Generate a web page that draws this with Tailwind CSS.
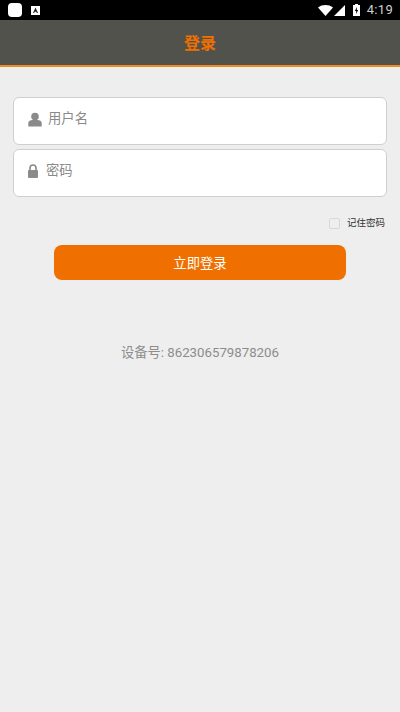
<!DOCTYPE html>
<html lang="zh">
<head>
    <meta charset="UTF-8">
    <meta name="viewport" content="width=device-width, initial-scale=1.0">
    <title>登录</title>
    <script src="https://cdn.jsdelivr.net/npm/@tailwindcss/browser@4"></script>
</head>
<body class="bg-[#eeeeee] h-[712px] overflow-hidden font-['Roboto','Noto_Sans_CJK_SC',sans-serif]">

    <!-- status bar -->
    <div class="h-5 bg-black flex items-center pl-[8px] pr-[7px]">
        <div class="w-[14px] h-[14px] bg-white rounded-[4px]"></div>
        <div class="w-[9px] h-[9px] ml-[9px] bg-white flex items-center justify-center">
            <svg viewBox="0 0 9 9" class="w-[9px] h-[9px]"><path d="M4.5 1.5 L7 7 H5.8 L5.3 5.8 H3.7 L3.2 7 H2 Z" fill="#222"/></svg>
        </div>
        <svg viewBox="0 0 15 11" class="w-[15px] h-[11px] ml-auto"><path d="M0 2.5 C4 -0.8 11 -0.8 15 2.5 L7.5 11 Z" fill="#fff"/></svg>
        <svg viewBox="0 0 11 11" class="w-[11px] h-[11px] ml-[1px]"><path d="M11 0 V11 H0 Z" fill="#fff"/></svg>
        <svg viewBox="0 0 7 12" class="w-[7px] h-[12px] ml-[8px]"><path fill-rule="evenodd" d="M2 0 H5 V1 H7 V12 H0 V1 H2 Z M4 3 L1.8 7 H3.2 L3 10 L5.2 6 H3.8 Z" fill="#fff"/></svg>
        <span class="ml-[7px] text-[13px] leading-5 text-[#cfcfcf] tracking-[0.3px]">4:19</span>
    </div>

    <!-- title bar -->
    <div class="h-[47px] bg-[#52524c] border-b-2 border-[#f08a24] flex items-center justify-center pt-[2px]">
        <h1 class="text-[16px] font-bold text-[#ef7000]">登录</h1>
    </div>

    <!-- form -->
    <div class="px-[13px] pt-[30px]">
        <div class="h-[48px] bg-white border border-[#cfcfcf] rounded-[6px] flex items-center pl-[14px] pb-[4px]">
            <svg viewBox="0 0 14 14" class="w-[14px] h-[15px]"><circle cx="7" cy="4" r="3.8" fill="#8a8a8a"/><path d="M0.3 14 V10.5 C0.3 8.5 3 7.3 7 7.3 C11 7.3 13.7 8.5 13.7 10.5 V14 Z" fill="#8a8a8a"/></svg>
            <span class="ml-[6px] text-[13.33px] text-[#8a8a8a]">用户名</span>
        </div>
        <div class="mt-[4px] h-[48px] bg-white border border-[#cfcfcf] rounded-[6px] flex items-center pl-[13px] pb-[4px]">
            <svg viewBox="0 0 12 14" class="w-[12px] h-[14px]"><path d="M3 6 V4 A3 3 0 0 1 9 4 V6" fill="none" stroke="#8a8a8a" stroke-width="1.6"/><rect x="1" y="6" width="10" height="8" rx="1" fill="#8a8a8a"/></svg>
            <span class="ml-[7px] text-[13.33px] text-[#8a8a8a]">密码</span>
        </div>

        <div class="mt-[19px] flex items-center justify-end pr-[2px]">
            <div class="w-[11px] h-[11px] border border-[#d8d8d8] rounded-[2px]"></div>
            <span class="ml-[7px] text-[9.5px] leading-[14px] text-[#333333]">记住密码</span>
        </div>

        <button class="block mt-[15px] ml-[41px] w-[292px] h-[35px] pt-[2px] bg-[#ef7000] rounded-[8px] text-white text-[13.33px]">立即登录</button>

        <p class="mt-[63px] text-center text-[13.25px] leading-5 text-[#8c8c8c]">设备号: 862306579878206</p>
    </div>

</body>
</html>
